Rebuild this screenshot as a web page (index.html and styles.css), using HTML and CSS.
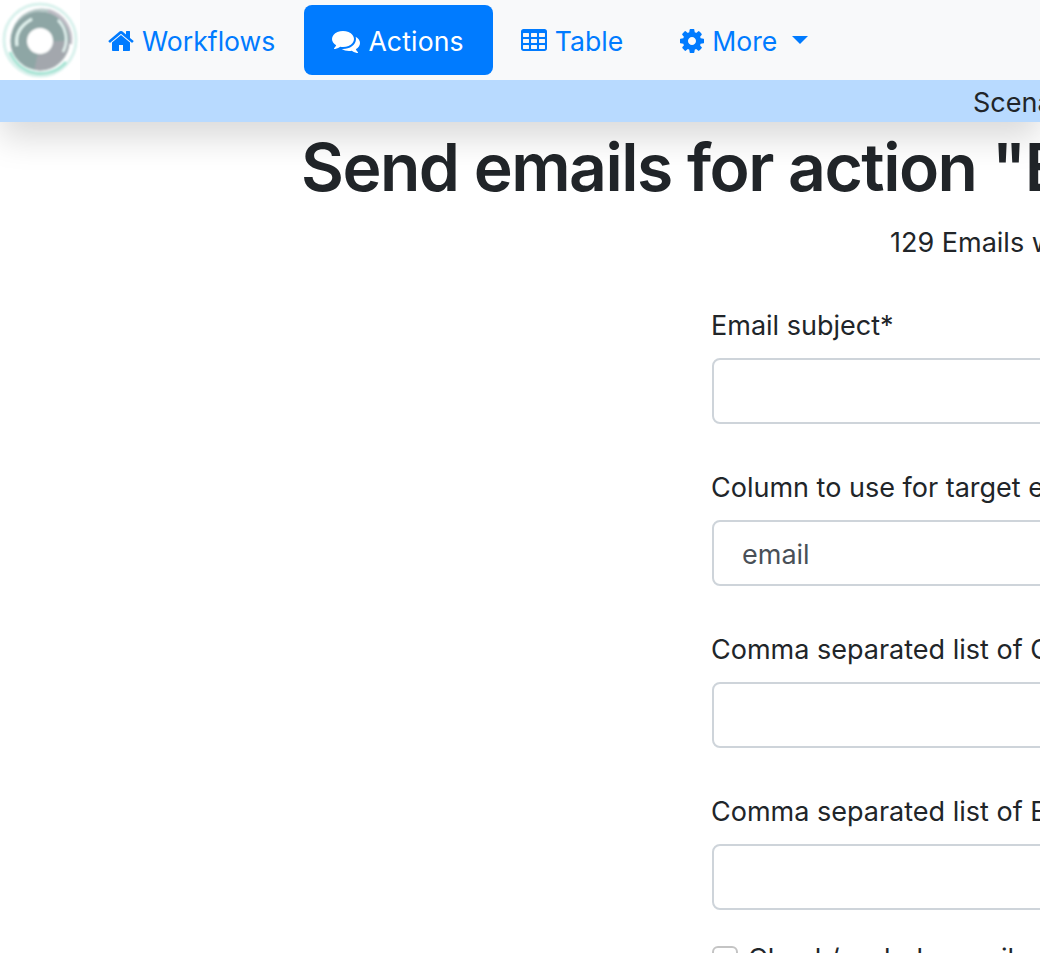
FILE: index.html
```html
<!DOCTYPE html>
<html lang="en">
<head>
    <meta charset="UTF-8">
    <title>Send emails</title>
    <link rel="stylesheet" href="styles.css">
</head>
<body>
<header class="top">
    <nav class="navbar">
        <a class="logo" href="#">
            <svg width="80" height="80" viewBox="0 0 80 80">
                <defs>
                    <filter id="soft"><feGaussianBlur stdDeviation="1"/></filter>
                </defs>
                <g filter="url(#soft)" fill="none">
                    <circle cx="40" cy="40" r="36" stroke="#d8f1ec" stroke-width="3"/>
                    <path d="M10 52A33 33 0 0 0 66 62" stroke="#a5e3d3" stroke-width="3"/>
                    <path d="M14 30A29 29 0 0 1 52 12" stroke="#b7c9c8" stroke-width="3"/>
                    <path d="M48 11A30 30 0 0 1 70 44" stroke="#bdbcc4" stroke-width="4"/>
                    <circle cx="40" cy="41" r="21" stroke="#8ea6a5" stroke-width="17"/>
                    <path d="M36 62A21 21 0 0 0 61 41" stroke="#a3a7ad" stroke-width="16"/>
                    <path d="M58 20A27 27 0 0 1 63 52" stroke="#e3f3f0" stroke-width="2.5"/>
                    <path d="M17 46C15 34 21 25 32 19" stroke="#e4f5f1" stroke-width="3"/>
                    <circle cx="40" cy="41" r="13" fill="#fff"/>
                </g>
            </svg>
        </a>
        <a class="nav-link" href="#">
            <svg class="icon icon-mid" viewBox="64 0 1664 1792"><path d="M1472 992v480q0 26-19 45t-45 19h-384v-384h-256v384h-384q-26 0-45-19t-19-45v-480q0-1 .5-3t.5-3l575-474 575 474q1 2 1 6zm223-69l-62 74q-8 9-21 11h-3q-13 0-21-7l-692-577-692 577q-12 8-24 7-13-2-21-11l-62-74q-8-10-7-23.5t11-21.5l719-599q32-26 76-26t76 26l244 204v-195q0-14 9-23t23-9h192q14 0 23 9t9 23v408l219 182q10 8 11 21.5t-7 23.5z"/></svg>
            Workflows
        </a>
        <a class="nav-link active" href="#">
            <svg class="icon" viewBox="0 0 1792 1792"><path d="M1408 768q0 139-94 257t-256.5 186.5-353.5 68.5q-86 0-176-16-124 88-278 128-36 9-86 16h-3q-11 0-20.5-8t-11.5-21q-1-3-1-6.5t.5-6.5 2-6l2.5-5 3.5-5.5 4-5 4.5-5 4-4.5q5-6 23-25t26-29.5 22.5-29 25-38.5 20.5-44q-124-72-195-177t-71-224q0-139 94-257t256.5-186.5 353.5-68.5 353.5 68.5 256.5 186.5 94 257zm384 256q0 120-71 224.5t-195 176.5q10 24 20.5 44t25 38.5 22.5 29 26 29.5 23 25q1 1 4 4.5t4.5 5 4 5 3.5 5.5l2.5 5 2 6 .5 6.5-1 6.5q-3 14-13 22t-22 7q-50-7-86-16-154-40-278-128-90 16-176 16-271 0-472-132 58 4 88 4 161 0 309-45t264-129q125-92 192-212t67-254q0-77-23-152 129 71 204 178t75 230z"/></svg>
            Actions
        </a>
        <a class="nav-link" href="#">
            <svg class="icon icon-mid" viewBox="64 0 1664 1792"><path d="M576 1376v-192q0-14-9-23t-23-9h-320q-14 0-23 9t-9 23v192q0 14 9 23t23 9h320q14 0 23-9t9-23zm0-384v-192q0-14-9-23t-23-9h-320q-14 0-23 9t-9 23v192q0 14 9 23t23 9h320q14 0 23-9t9-23zm512 384v-192q0-14-9-23t-23-9h-320q-14 0-23 9t-9 23v192q0 14 9 23t23 9h320q14 0 23-9t9-23zm-512-768v-192q0-14-9-23t-23-9h-320q-14 0-23 9t-9 23v192q0 14 9 23t23 9h320q14 0 23-9t9-23zm512 384v-192q0-14-9-23t-23-9h-320q-14 0-23 9t-9 23v192q0 14 9 23t23 9h320q14 0 23-9t9-23zm512 384v-192q0-14-9-23t-23-9h-320q-14 0-23 9t-9 23v192q0 14 9 23t23 9h320q14 0 23-9t9-23zm-512-768v-192q0-14-9-23t-23-9h-320q-14 0-23 9t-9 23v192q0 14 9 23t23 9h320q14 0 23-9t9-23zm512 384v-192q0-14-9-23t-23-9h-320q-14 0-23 9t-9 23v192q0 14 9 23t23 9h320q14 0 23-9t9-23zm0-384v-192q0-14-9-23t-23-9h-320q-14 0-23 9t-9 23v192q0 14 9 23t23 9h320q14 0 23-9t9-23zm128-320v1088q0 66-47 113t-113 47h-1344q-66 0-113-47t-47-113v-1088q0-66 47-113t113-47h1344q66 0 113 47t47 113z"/></svg>
            Table
        </a>
        <a class="nav-link" href="#">
            <svg class="icon icon-small" viewBox="128 0 1536 1792"><path d="M1152 896q0-106-75-181t-181-75-181 75-75 181 75 181 181 75 181-75 75-181zm512-109v222q0 12-8 23t-20 13l-185 28q-19 54-39 91 35 50 107 138 10 12 10 25t-9 23q-27 37-99 108t-94 71q-12 0-26-9l-138-108q-44 23-91 38-16 136-29 186-7 28-36 28h-222q-14 0-24.5-8.5t-11.5-21.5l-28-184q-49-16-90-37l-141 107q-10 9-25 9-14 0-25-11-126-114-165-168-7-10-7-23 0-12 8-23 15-21 51-66.5t54-70.5q-27-50-41-99l-183-27q-13-2-21-12.5t-8-23.5v-222q0-12 8-23t19-13l186-28q14-46 39-92-40-57-107-138-10-12-10-24 0-10 9-23 26-36 98.5-107.5t94.5-71.5q13 0 26 10l138 107q44-23 91-38 16-136 29-186 7-28 36-28h222q14 0 24.5 8.5t11.5 21.5l28 184q49 16 90 37l142-107q9-9 24-9 13 0 25 10 129 119 165 170 7 8 7 22 0 12-8 23-15 21-51 66.5t-54 70.5q26 50 41 98l183 28q13 2 21 12.5t8 23.5z"/></svg>
            More
            <span class="caret"></span>
        </a>
    </nav>
    <div class="banner">Scenario</div>
</header>

<main class="page">
    <h1 class="title">Send emails for action "Email"</h1>
    <p class="count">129 Emails will be sent</p>

    <form class="mail-form">
        <div class="field">
            <label class="label">Email subject*</label>
            <input class="control" type="text">
        </div>
        <div class="field">
            <label class="label">Column to use for target email</label>
            <div class="control select-value">email</div>
        </div>
        <div class="field">
            <label class="label">Comma separated list of CC emails</label>
            <input class="control" type="text">
        </div>
        <div class="field">
            <label class="label">Comma separated list of BCC emails</label>
            <input class="control" type="text">
        </div>
        <div class="check">
            <input class="check-box" type="checkbox">
            <label class="label">Check/exclude emails</label>
        </div>
    </form>
</main>
</body>
</html>
```

FILE: styles.css
```css
html, body {
    margin: 0;
    padding: 0;
    height: 100%;
    overflow: hidden;
}

body {
    font-family: Inter, "Noto Sans", sans-serif;
    font-size: 27px;
    line-height: 39px;
    color: #212529;
    background: #fff;
}

.top {
    position: relative;
    z-index: 2;
    box-shadow: 0 16px 32px rgba(0, 0, 0, 0.15);
}

.navbar {
    display: flex;
    align-items: center;
    height: 80px;
    background: #f8f9fa;
}

.logo {
    display: block;
    width: 80px;
    height: 80px;
    background: #fff;
}

.nav-link {
    display: flex;
    align-items: center;
    box-sizing: border-box;
    height: 70px;
    padding: 2px 29px 0 28px;
    border-radius: 8px;
    color: #007bff;
    font-size: 26.6px;
    text-decoration: none;
    white-space: nowrap;
}

.nav-link.active {
    background: #007bff;
    color: #fff;
    letter-spacing: 0.15px;
}

.icon {
    flex: none;
    width: 28px;
    height: 28px;
    margin-right: 8px;
    fill: currentColor;
}

.icon-mid {
    width: 26px;
}

.icon-small {
    width: 24px;
}

.caret {
    width: 0;
    height: 0;
    margin-left: 15px;
    margin-bottom: 2px;
    border-top: 8px solid currentColor;
    border-left: 8px solid transparent;
    border-right: 8px solid transparent;
}

.banner {
    height: 42px;
    padding-left: 973px;
    background: #b8daff;
    white-space: nowrap;
    line-height: 46px;
}

.page {
    width: 1600px;
}

.title {
    margin: 0;
    padding: 1px 0 0 301px;
    font-size: 66px;
    font-weight: 575;
    letter-spacing: -1.5px;
    line-height: 88px;
    white-space: nowrap;
}

.count {
    margin: 12px 0 0;
    padding-left: 890px;
    white-space: nowrap;
}

.mail-form {
    margin: 44px 0 0 712px;
    width: 700px;
}

.field {
    margin-bottom: 44px;
}

.label {
    display: block;
    margin: 0 0 13px -1px;
    white-space: nowrap;
}

.control {
    display: block;
    box-sizing: border-box;
    width: 100%;
    height: 66px;
    padding: 0 28px;
    border: 2px solid #ced4da;
    border-radius: 8px;
    background: #fff;
    font: inherit;
    color: #495057;
}

.select-value {
    line-height: 66px;
}

.check {
    display: flex;
    align-items: center;
    gap: 10px;
    margin-top: -15px;
}

.check .label {
    margin: 0;
}

.check-box {
    appearance: none;
    width: 26px;
    height: 26px;
    margin: 0;
    border: 2px solid #c4c4c4;
    border-radius: 6px;
    background: #fff;
}
```
